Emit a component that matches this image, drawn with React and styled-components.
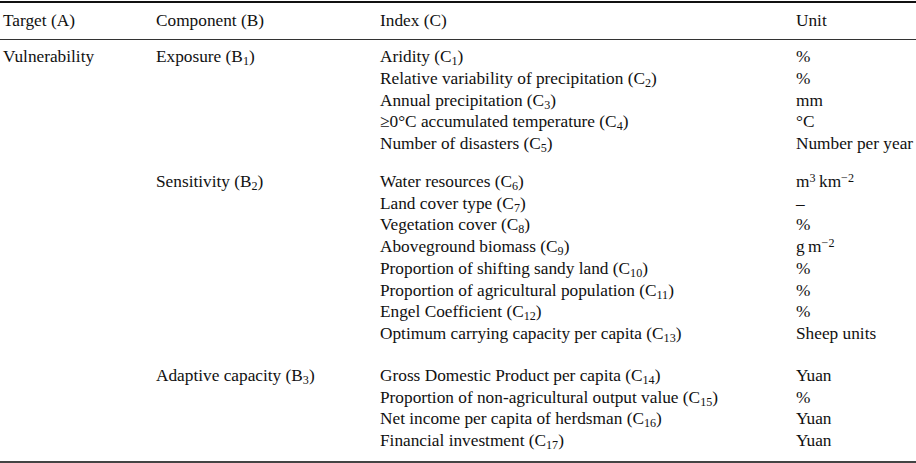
import React from "react";
import styled, { createGlobalStyle } from "styled-components";

const Global = createGlobalStyle`
  html, body { margin: 0; padding: 0; background: #fff; overflow: hidden; }
  body { font-family: "Liberation Serif", "Times New Roman", serif; color: #111; }
`;

const Table = styled.table`
  border-collapse: collapse;
  table-layout: fixed;
  width: 916px;
  margin-top: 1px;
  font-size: 17.3px;
  line-height: 21.75px;
  border-top: 2px solid #111;
  border-bottom: 2px solid #444;
`;

const HeadCell = styled.th`
  text-align: left;
  font-weight: normal;
  height: 36px;
  padding: 0;
  vertical-align: middle;
  border-bottom: 1.5px solid #333;
  padding-left: ${(p) => p.$pl || 0}px;
  white-space: nowrap;
`;

const Cell = styled.td`
  padding: 0;
  padding-top: ${(p) => (p.$first ? p.$gap : 0)}px;
  padding-left: ${(p) => p.$pl || 0}px;
  vertical-align: top;
  white-space: nowrap;
  overflow: visible;
`;

const Sub = styled.sub`
  font-size: 0.7em;
  line-height: 0;
  vertical-align: -0.25em;
`;

const Sup = styled.sup`
  font-size: 0.7em;
  line-height: 0;
  vertical-align: 0.45em;
`;

const C = ({ n }) => (
  <>
    (C<Sub>{n}</Sub>)
  </>
);

const groups = [
  {
    target: "Vulnerability",
    comp: <>Exposure (B<Sub>1</Sub>)</>,
    gap: 6,
    rows: [
      [<>Aridity <C n={1} /></>, "%"],
      [<>Relative variability of precipitation <C n={2} /></>, "%"],
      [<>Annual precipitation <C n={3} /></>, "mm"],
      [<>≥0°C accumulated temperature <C n={4} /></>, "°C"],
      [<>Number of disasters <C n={5} /></>, "Number per year"],
    ],
  },
  {
    target: "",
    comp: <>Sensitivity (B<Sub>2</Sub>)</>,
    gap: 16,
    rows: [
      [<>Water resources <C n={6} /></>, <>m<Sup>3</Sup>{"\u2009"}km<Sup>−2</Sup></>],
      [<>Land cover type <C n={7} /></>, "–"],
      [<>Vegetation cover <C n={8} /></>, "%"],
      [<>Aboveground biomass <C n={9} /></>, <>g{"\u2009"}m<Sup>−2</Sup></>],
      [<>Proportion of shifting sandy land <C n={10} /></>, "%"],
      [<>Proportion of agricultural population <C n={11} /></>, "%"],
      [<>Engel Coefficient <C n={12} /></>, "%"],
      [<>Optimum carrying capacity per capita <C n={13} /></>, "Sheep units"],
    ],
  },
  {
    target: "",
    comp: <>Adaptive capacity (B<Sub>3</Sub>)</>,
    gap: 20,
    rows: [
      [<>Gross Domestic Product per capita <C n={14} /></>, "Yuan"],
      [<>Proportion of non-agricultural output value <C n={15} /></>, "%"],
      [<>Net income per capita of herdsman <C n={16} /></>, "Yuan"],
      [<>Financial investment <C n={17} /></>, "Yuan"],
    ],
  },
];

const Col = styled.col`
  width: ${(p) => p.$w}px;
`;

const Spacer = styled.td`
  height: 9px;
  padding: 0;
`;

export default function App() {
  return (
    <>
      <Global />
      <Table>
        <colgroup>
          <Col $w={156} />
          <Col $w={224} />
          <Col $w={416} />
          <Col $w={120} />
        </colgroup>
        <thead>
          <tr>
            <HeadCell $pl={3}>Target (A)</HeadCell>
            <HeadCell>Component (B)</HeadCell>
            <HeadCell>Index (C)</HeadCell>
            <HeadCell>Unit</HeadCell>
          </tr>
        </thead>
        <tbody>
          {groups.flatMap((g, gi) =>
            g.rows.map((r, ri) => (
              <tr key={`${gi}-${ri}`}>
                <Cell $first={ri === 0} $gap={g.gap} $pl={3}>
                  {ri === 0 ? g.target : null}
                </Cell>
                <Cell $first={ri === 0} $gap={g.gap}>
                  {ri === 0 ? g.comp : null}
                </Cell>
                <Cell $first={ri === 0} $gap={g.gap}>{r[0]}</Cell>
                <Cell $first={ri === 0} $gap={g.gap}>{r[1]}</Cell>
              </tr>
            ))
          )}
          <tr>
            <Spacer colSpan={4} />
          </tr>
        </tbody>
      </Table>
    </>
  );
}
